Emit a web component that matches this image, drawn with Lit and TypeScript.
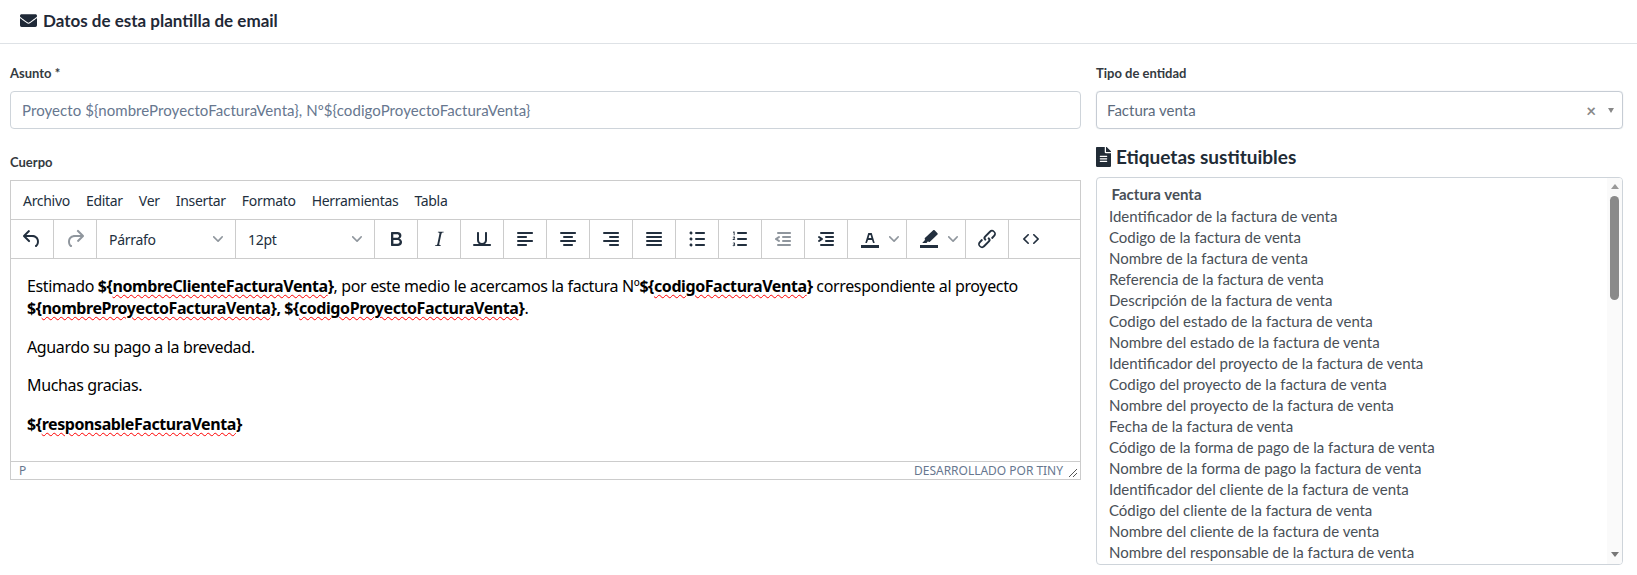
import { LitElement, html, css } from "lit";
import { customElement } from "lit/decorators.js";

const P: Record<string, string> = {
  undo: "M6.4 8H12c3.7 0 6.2 2 6.8 5.1.6 2.7-.4 5.6-2.3 6.8a1 1 0 0 1-1-1.8c1.1-.6 1.8-2.7 1.4-4.6-.5-2.1-2.1-3.5-4.9-3.5H6.4l3.3 3.3a1 1 0 1 1-1.4 1.4l-5-5a1 1 0 0 1 0-1.4l5-5a1 1 0 0 1 1.4 1.4L6.4 8z",
  redo: "M17.6 10H12c-2.8 0-4.4 1.4-4.9 3.5-.4 2 .3 4 1.4 4.6a1 1 0 1 1-1 1.8c-2-1.2-2.9-4.1-2.3-6.8.6-3 3-5.1 6.8-5.1h5.6l-3.3-3.3a1 1 0 1 1 1.4-1.4l5 5a1 1 0 0 1 0 1.4l-5 5a1 1 0 0 1-1.4-1.4l3.3-3.3z",
  bold: "M7.8 19c-.3 0-.5 0-.6-.2l-.2-.5V5.7c0-.2 0-.4.2-.5l.6-.2h5c1.5 0 2.7.3 3.5 1 .7.6 1.1 1.4 1.1 2.5a3 3 0 0 1-.6 1.9c-.4.6-1 1-1.6 1.2.4.1.9.3 1.3.6s.8.7 1 1.2c.4.4.5 1 .5 1.6 0 1.3-.4 2.3-1.3 3-.8.7-2.1 1-3.8 1H7.8zm5-8.3c.6 0 1.2-.1 1.6-.5.4-.3.6-.7.6-1.3 0-1.1-.8-1.7-2.3-1.7H9.3v3.5h3.4zm.5 6c.7 0 1.3-.1 1.7-.4.4-.4.6-.9.6-1.5s-.2-1-.7-1.4c-.4-.3-1-.4-2-.4H9.4v3.8h4z",
  italic: "M16.7 4.7l-.1.9h-.3c-.6 0-1 0-1.4.3-.3.3-.4.6-.5 1.1l-2.1 9.8v.6c0 .5.4.8 1.4.8h.2l-.2.8H8l.2-.8h.2c1.1 0 1.8-.5 2-1.5l2-9.8.1-.5c0-.6-.4-.8-1.4-.8h-.3l.2-.9h5.8z",
  underline: "M16 5c.6 0 1 .4 1 1v7c0 2.8-2.2 5-5 5s-5-2.2-5-5V6c0-.6.4-1 1-1s1 .4 1 1v7c0 1.7 1.3 3 3 3s3-1.3 3-3V6c0-.6.4-1 1-1zM4 17h16c.6 0 1 .4 1 1s-.4 1-1 1H4a1 1 0 1 1 0-2z",
  left: "M5 5h14c.6 0 1 .4 1 1s-.4 1-1 1H5a1 1 0 1 1 0-2zm0 4h8c.6 0 1 .4 1 1s-.4 1-1 1H5a1 1 0 1 1 0-2zm0 8h8c.6 0 1 .4 1 1s-.4 1-1 1H5a1 1 0 0 1 0-2zm0-4h14c.6 0 1 .4 1 1s-.4 1-1 1H5a1 1 0 0 1 0-2z",
  center: "M5 5h14c.6 0 1 .4 1 1s-.4 1-1 1H5a1 1 0 1 1 0-2zm3 4h8c.6 0 1 .4 1 1s-.4 1-1 1H8a1 1 0 1 1 0-2zm0 8h8c.6 0 1 .4 1 1s-.4 1-1 1H8a1 1 0 0 1 0-2zm-3-4h14c.6 0 1 .4 1 1s-.4 1-1 1H5a1 1 0 0 1 0-2z",
  right: "M5 5h14c.6 0 1 .4 1 1s-.4 1-1 1H5a1 1 0 1 1 0-2zm6 4h8c.6 0 1 .4 1 1s-.4 1-1 1h-8a1 1 0 0 1 0-2zm0 8h8c.6 0 1 .4 1 1s-.4 1-1 1h-8a1 1 0 0 1 0-2zm-6-4h14c.6 0 1 .4 1 1s-.4 1-1 1H5a1 1 0 0 1 0-2z",
  justify: "M5 5h14c.6 0 1 .4 1 1s-.4 1-1 1H5a1 1 0 1 1 0-2zm0 4h14c.6 0 1 .4 1 1s-.4 1-1 1H5a1 1 0 1 1 0-2zm0 4h14c.6 0 1 .4 1 1s-.4 1-1 1H5a1 1 0 0 1 0-2zm0 4h14c.6 0 1 .4 1 1s-.4 1-1 1H5a1 1 0 0 1 0-2z",
  ul: "M11 5h8c.6 0 1 .4 1 1s-.4 1-1 1h-8a1 1 0 0 1 0-2zm0 6h8c.6 0 1 .4 1 1s-.4 1-1 1h-8a1 1 0 0 1 0-2zm0 6h8c.6 0 1 .4 1 1s-.4 1-1 1h-8a1 1 0 0 1 0-2zM4.5 6c0-.4.1-.8.4-1 .3-.4.7-.5 1.1-.5.4 0 .8.1 1 .4.4.3.5.7.5 1.1 0 .4-.1.8-.4 1-.3.4-.7.5-1.1.5-.4 0-.8-.1-1-.4-.4-.3-.5-.7-.5-1.1zm0 6c0-.4.1-.8.4-1 .3-.4.7-.5 1.1-.5.4 0 .8.1 1 .4.4.3.5.7.5 1.1 0 .4-.1.8-.4 1-.3.4-.7.5-1.1.5-.4 0-.8-.1-1-.4-.4-.3-.5-.7-.5-1.1zm0 6c0-.4.1-.8.4-1 .3-.4.7-.5 1.1-.5.4 0 .8.1 1 .4.4.3.5.7.5 1.1 0 .4-.1.8-.4 1-.3.4-.7.5-1.1.5-.4 0-.8-.1-1-.4-.4-.3-.5-.7-.5-1.1z",
  ol: "M10 17h8c.6 0 1 .4 1 1s-.4 1-1 1h-8a1 1 0 0 1 0-2zm0-6h8c.6 0 1 .4 1 1s-.4 1-1 1h-8a1 1 0 0 1 0-2zm0-6h8c.6 0 1 .4 1 1s-.4 1-1 1h-8a1 1 0 1 1 0-2zM5.6 4.4h1v3.8h-.9V5.4l-.7.3v-.8l.6-.5zM4.6 10.3c.2-.5.7-.8 1.3-.8.8 0 1.2.5 1.2 1.1 0 .5-.3.8-.7 1.2l-.6.5h1.3v.8H4.6v-.7l1.3-1.2c.2-.2.3-.4.3-.5 0-.2-.1-.4-.3-.4s-.4.2-.5.4l-.8-.4zM4.6 16.2c.2-.4.7-.7 1.3-.7.7 0 1.2.4 1.2 1 0 .3-.2.6-.4.8.3.2.5.5.5.8 0 .7-.6 1.1-1.3 1.1-.7 0-1.2-.3-1.4-.8l.8-.3c.1.2.3.4.6.4s.4-.2.4-.4-.2-.4-.5-.4h-.4V17h.4c.2 0 .4-.2.4-.4s-.2-.3-.4-.3-.3.1-.4.3l-.8-.4z",
  outdent: "M7 5h12c.6 0 1 .4 1 1s-.4 1-1 1H7a1 1 0 1 1 0-2zm5 4h7c.6 0 1 .4 1 1s-.4 1-1 1h-7a1 1 0 0 1 0-2zm0 4h7c.6 0 1 .4 1 1s-.4 1-1 1h-7a1 1 0 0 1 0-2zm-5 4h12a1 1 0 0 1 0 2H7a1 1 0 0 1 0-2zm1.6-3.8a1 1 0 0 1-1.2 1.6l-3-2a1 1 0 0 1 0-1.6l3-2a1 1 0 0 1 1.2 1.6L6.8 12l1.8 1.2z",
  indent: "M7 5h12c.6 0 1 .4 1 1s-.4 1-1 1H7a1 1 0 1 1 0-2zm5 4h7c.6 0 1 .4 1 1s-.4 1-1 1h-7a1 1 0 0 1 0-2zm0 4h7c.6 0 1 .4 1 1s-.4 1-1 1h-7a1 1 0 0 1 0-2zm-5 4h12a1 1 0 0 1 0 2H7a1 1 0 0 1 0-2zm-2.6-3.8L6.2 12l-1.8-1.2a1 1 0 0 1 1.2-1.6l3 2a1 1 0 0 1 0 1.6l-3 2a1 1 0 1 1-1.2-1.6z",
  textcolor: "M3 18h18v3H3zM8.7 16h-.8a.5.5 0 0 1-.5-.6l2.7-9c.1-.3.3-.4.5-.4h2.8c.2 0 .4.1.5.4l2.7 9a.5.5 0 0 1-.5.6h-.8a.5.5 0 0 1-.4-.4l-.7-2.2c0-.3-.3-.4-.5-.4h-3.4c-.2 0-.4.1-.5.4l-.7 2.2c0 .3-.2.4-.4.4zm2.6-7.6l-.6 2a.5.5 0 0 0 .5.6h1.6a.5.5 0 0 0 .5-.6l-.6-2c0-.3-.3-.4-.5-.4h-.4c-.2 0-.4.1-.5.4z",
  highlight: "M3 18h18v3H3zM17.6 3.3l2.9 2.9c.4.4.4 1 0 1.4l-7.6 7.2c-.4.4-1 .4-1.4 0l-.5-.5-1.5 1.7H5.2l3-3.3-.3-.3c-.4-.4-.4-1 0-1.4l8.3-7.7c.4-.4 1-.4 1.4 0z",
  link: "M6.2 12.3a1 1 0 0 1 1.4 1.4l-2 2a2 2 0 1 0 2.8 2.8l4.8-4.8a1 1 0 0 0 0-1.4 1 1 0 1 1 1.4-1.3 2.9 2.9 0 0 1 0 4.1l-4.9 4.9a3.9 3.9 0 0 1-5.5-5.5l2-2.2zm11.6-.6a1 1 0 0 1-1.4-1.4l2-2a2 2 0 1 0-2.8-2.8l-4.8 4.8a1 1 0 0 0 0 1.4 1 1 0 1 1-1.4 1.3 2.9 2.9 0 0 1 0-4.1L14.3 4a3.9 3.9 0 0 1 5.5 5.5l-2 2.2z",
  code: "M9.8 15.7c.3.3.3.8 0 1-.3.4-.9.4-1.2 0l-4.4-4.1a.8.8 0 0 1 0-1.2l4.4-4.2c.3-.3.9-.3 1.2 0 .3.3.3.8 0 1.1L6 12l3.8 3.7zm4.4 0L18 12l-3.8-3.7c-.3-.3-.3-.8 0-1.1.3-.3.9-.3 1.2 0l4.4 4.2c.3.3.3.9 0 1.2l-4.4 4.2c-.3.3-.9.3-1.2 0a.8.8 0 0 1 0-1.1z",
};

const icon = (n: string, off = false) =>
  html`<svg class="ic ${off ? "off" : ""}" viewBox="0 0 24 24"><path d=${P[n]}></path></svg>`;

const chev = html`<svg class="chev" viewBox="0 0 10 10"><path d="M8.7 2.2c.3-.3.8-.3 1 0 .4.4.4.9 0 1.2L5.7 7.8c-.3.3-.9.3-1.2 0L.2 3.4a.8.8 0 0 1 0-1.2c.3-.3.8-.3 1.1 0L5 6l3.7-3.8z"></path></svg>`;

const MENU = ["Archivo", "Editar", "Ver", "Insertar", "Formato", "Herramientas", "Tabla"];
const ITEMS = [
  "Identificador de la factura de venta",
  "Codigo de la factura de venta",
  "Nombre de la factura de venta",
  "Referencia de la factura de venta",
  "Descripción de la factura de venta",
  "Codigo del estado de la factura de venta",
  "Nombre del estado de la factura de venta",
  "Identificador del proyecto de la factura de venta",
  "Codigo del proyecto de la factura de venta",
  "Nombre del proyecto de la factura de venta",
  "Fecha de la factura de venta",
  "Código de la forma de pago de la factura de venta",
  "Nombre de la forma de pago la factura de venta",
  "Identificador del cliente de la factura de venta",
  "Código del cliente de la factura de venta",
  "Nombre del cliente de la factura de venta",
  "Nombre del responsable de la factura de venta",
];

const tag = (n: string) => html`<strong>\${<span class="sq">${n}</span>}</strong>`;

@customElement("app-root")
export class AppRoot extends LitElement {
  static styles = css`
    :host { display: block; background: #fff; font-family: "Lato", "Noto Sans", sans-serif; color: #212529; }
    * { box-sizing: border-box; }
    .head { height: 44px; border-bottom: 1px solid #dee2e6; display: flex; align-items: center; gap: 6px; padding: 0 0 2px 20px; font-size: 17px; font-weight: 700; color: #1f2937; }
    .head svg { width: 17px; height: 17px; fill: #1f2937; }
    .main { display: grid; grid-template-columns: 1fr 527px; column-gap: 15px; padding: 19px 14px 0 10px; }
    .col { display: flex; flex-direction: column; min-width: 0; }
    label { display: block; height: 20px; line-height: 20px; margin-bottom: 8px; font-size: 13px; font-weight: 700; color: #343a40; }
    .input { height: 38px; border: 1px solid #ced4da; border-radius: 4px; display: flex; align-items: center; padding: 0 11px; font-size: 15px; color: #67778f; letter-spacing: 0.07px; }
    label.cuerpo { margin-top: 23px; margin-bottom: 8px; }
    .editor { height: 300px; border: 1px solid #ccc; display: flex; flex-direction: column; font-family: "Noto Sans", sans-serif; color: #222f3e; }
    .menu { height: 39px; flex: none; display: flex; align-items: center; padding-left: 4px; border-bottom: 1px solid #ccc; font-size: 14px; letter-spacing: -0.3px; }
    .menu span { padding: 0 8px; }
    .tools { height: 39px; flex: none; display: flex; border-bottom: 1px solid #ccc; }
    .tb { width: 43px; flex: none; border-right: 1px solid #ccc; display: flex; align-items: center; justify-content: center; }
    .tb.last { border-right: 0; }
    .tb.wide { width: 59px; justify-content: flex-start; padding-left: 10px; gap: 7px; }
    .tb.sel { width: 139px; justify-content: space-between; padding: 0 12px; font-size: 14px; letter-spacing: -0.3px; }
    .ic { width: 24px; height: 24px; fill: #222f3e; flex: none; }
    .ic.off { opacity: .5; }
    .chev { width: 10px; height: 10px; fill: #222f3e; opacity: .5; flex: none; }
    .body { flex: 1; min-height: 0; overflow: hidden; padding: 16px 16px 0 16px; font-size: 16px; line-height: 22.4px; color: #000; letter-spacing: -0.36px; }
    .body p { margin: 0 0 16px; }
    .body strong { font-weight: 700; letter-spacing: -0.42px; }
    .sq { text-decoration: underline wavy #f00 1px; text-underline-offset: 2px; }
    .status { height: 18px; flex: none; border-top: 1px solid #ccc; display: flex; align-items: center; justify-content: space-between; padding: 0 2px 0 8px; font-size: 12px; color: #67778f; }
    .status .r { display: flex; align-items: center; gap: 5px; letter-spacing: -0.02px; }
    .status svg { width: 10px; height: 10px; stroke: #555; stroke-width: 1; fill: none; margin-top: 5px; }
    .select { height: 38px; border: 1px solid #c6ccd4; border-radius: 4px; box-shadow: 0 0 1px #c6ccd4; display: flex; align-items: center; padding: 0 8px 0 10px; font-size: 15px; color: #5c6b7d; }
    .select .grow { flex: 1; }
    .x { font-size: 17px; line-height: 17px; font-weight: 700; color: #888; margin-right: 12px; }
    .caret { width: 0; height: 0; border-left: 3.5px solid transparent; border-right: 3.5px solid transparent; border-top: 5px solid #888; }
    h3 { margin: 16px 0 8px; height: 24px; display: flex; align-items: center; gap: 5px; font-size: 19px; font-weight: 700; line-height: 24px; color: #212b36; }
    h3 svg { width: 15px; height: 20px; fill: #212b36; }
    .list { height: 388px; border: 1px solid #ced4da; border-radius: 4px; display: flex; overflow: hidden; }
    .rows { flex: 1; overflow: hidden; padding: 6px 0 0 12px; font-size: 15px; line-height: 21px; color: #495057; }
    .rows div { white-space: nowrap; }
    .rows .t { font-weight: 700; padding-left: 2.5px; margin-bottom: 1px; }
    .sb { width: 15px; flex: none; background: #fafafa; display: flex; flex-direction: column; align-items: center; }
    .up, .down { width: 0; height: 0; border-left: 4.5px solid transparent; border-right: 4.5px solid transparent; }
    .up { border-bottom: 5px solid #999; margin: 6px 0 7px; }
    .down { border-top: 5px solid #777; margin: auto 0 7px; }
    .thumb { width: 9px; height: 104px; border-radius: 5px; background: #8a8a8a; }
  `;

  render() {
    return html`
      <div class="head">
        <svg viewBox="0 0 512 512"><path d="M502.3 190.8c3.9-3.1 9.7-.2 9.7 4.7V400c0 26.5-21.5 48-48 48H48c-26.5 0-48-21.5-48-48V195.6c0-5 5.7-7.8 9.7-4.7 22.4 17.4 52.1 39.5 154.1 113.6 21.1 15.4 56.7 47.8 92.2 47.6 35.7.3 72-32.8 92.3-47.6 102-74.1 131.6-96.3 154-113.7zM256 320c23.2.4 56.6-29.2 73.4-41.4 132.7-96.3 142.8-104.7 173.4-128.7 5.8-4.5 9.2-11.5 9.2-18.9v-19c0-26.5-21.5-48-48-48H48C21.5 64 0 85.5 0 112v19c0 7.4 3.4 14.3 9.2 18.9 30.6 23.9 40.7 32.4 173.4 128.7 16.8 12.2 50.2 41.8 73.4 41.4z"></path></svg>
        <span>Datos de esta plantilla de email</span>
      </div>
      <div class="main">
        <div class="col">
          <label>Asunto *</label>
          <div class="input">Proyecto \${nombreProyectoFacturaVenta}, Nº\${codigoProyectoFacturaVenta}</div>
          <label class="cuerpo">Cuerpo</label>
          <div class="editor">
            <div class="menu">${MENU.map((m) => html`<span>${m}</span>`)}</div>
            <div class="tools">
              <div class="tb">${icon("undo")}</div>
              <div class="tb">${icon("redo", true)}</div>
              <div class="tb sel"><span>Párrafo</span>${chev}</div>
              <div class="tb sel"><span>12pt</span>${chev}</div>
              ${["bold", "italic", "underline", "left", "center", "right", "justify", "ul", "ol"].map((n) => html`<div class="tb">${icon(n)}</div>`)}
              <div class="tb">${icon("outdent", true)}</div>
              <div class="tb">${icon("indent")}</div>
              <div class="tb wide">${icon("textcolor")}${chev}</div>
              <div class="tb wide">${icon("highlight")}${chev}</div>
              <div class="tb">${icon("link")}</div>
              <div class="tb last">${icon("code")}</div>
            </div>
            <div class="body">
              <p>Estimado ${tag("nombreClienteFacturaVenta")}, por este medio le acercamos la factura Nº${tag("codigoFacturaVenta")} correspondiente al proyecto ${tag("nombreProyectoFacturaVenta")}<strong>, </strong>${tag("codigoProyectoFacturaVenta")}.</p>
              <p>Aguardo su pago a la brevedad.</p>
              <p>Muchas gracias.</p>
              <p>${tag("responsableFacturaVenta")}</p>
            </div>
            <div class="status">
              <span>P</span>
              <span class="r"><span>DESARROLLADO POR TINY</span><svg viewBox="0 0 10 10"><path d="M1 9 9 1M5 9 9 5"></path></svg></span>
            </div>
          </div>
        </div>
        <div class="col">
          <label>Tipo de entidad</label>
          <div class="select"><span class="grow">Factura venta</span><span class="x">×</span><span class="caret"></span></div>
          <h3>
            <svg viewBox="0 0 384 512"><path d="M224 136V0H24C10.7 0 0 10.7 0 24v464c0 13.3 10.7 24 24 24h336c13.3 0 24-10.7 24-24V160H248c-13.2 0-24-10.8-24-24zm64 236c0 6.6-5.4 12-12 12H108c-6.6 0-12-5.4-12-12v-8c0-6.6 5.4-12 12-12h168c6.6 0 12 5.4 12 12v8zm0-64c0 6.6-5.4 12-12 12H108c-6.6 0-12-5.4-12-12v-8c0-6.6 5.4-12 12-12h168c6.6 0 12 5.4 12 12v8zm0-72v8c0 6.6-5.4 12-12 12H108c-6.6 0-12-5.4-12-12v-8c0-6.6 5.4-12 12-12h168c6.6 0 12 5.4 12 12zm96-114.1v6.1H256V0h6.1c6.4 0 12.5 2.5 17 7l97.9 98c4.5 4.5 7 10.6 7 16.9z"></path></svg>
            <span>Etiquetas sustituibles</span>
          </h3>
          <div class="list">
            <div class="rows">
              <div class="t">Factura venta</div>
              ${ITEMS.map((i) => html`<div>${i}</div>`)}
            </div>
            <div class="sb"><span class="up"></span><span class="thumb"></span><span class="down"></span></div>
          </div>
        </div>
      </div>
    `;
  }
}
